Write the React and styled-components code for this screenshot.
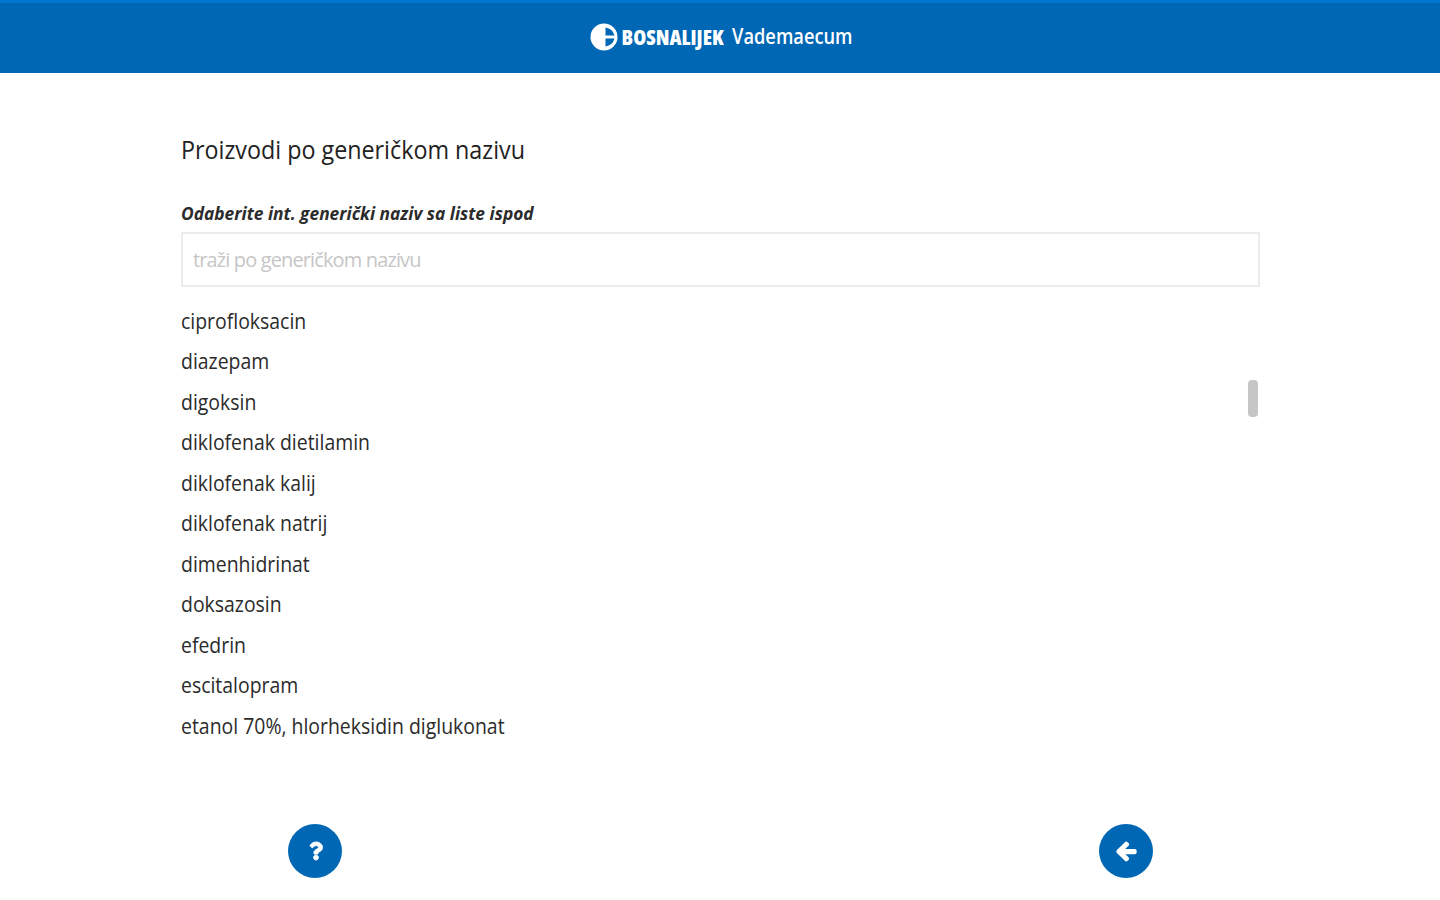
import React from 'react';
import styled, { createGlobalStyle } from 'styled-components';
import { FaArrowLeft, FaQuestion } from 'react-icons/fa';

const GlobalStyle = createGlobalStyle`
  * {
    box-sizing: border-box;
  }
  body {
    margin: 0;
    background: #fff;
    color: #2b2b2b;
    font-family: 'Open Sans', 'Noto Sans', sans-serif;
    overflow: hidden;
  }
`;

const Page = styled.div`
  display: flex;
  flex-direction: column;
  height: 900px;
`;

const Header = styled.header`
  display: flex;
  align-items: center;
  justify-content: center;
  height: 73px;
  padding: 0 0 2px 3px;
  background: #0067b5;
  border-top: 3px solid #0078d2;
  color: #fff;
`;

const Logo = styled.svg`
  width: 28px;
  height: 28px;
  margin-right: 3px;
`;

const Brand = styled.span`
  font-size: 21px;
  line-height: 28px;
  font-weight: 800;
  font-stretch: 75%;
`;

const AppName = styled.span`
  width: 121px;
  margin: 0 0 2px 8px;
  font-size: 21px;
  line-height: 28px;
  font-weight: 600;
  transform: scaleX(0.87);
  transform-origin: left;
`;

const Main = styled.main`
  flex: 1;
  width: 1080px;
  margin: 0 auto;
  padding: 56px 0 0 1px;
`;

const Title = styled.h1`
  margin: 0;
  font-size: 26px;
  line-height: 40px;
  font-weight: 400;
  color: #222;
  transform: scaleX(0.896);
  transform-origin: left;
`;

const Label = styled.label`
  display: block;
  margin-top: 31px;
  font-size: 18px;
  line-height: 26px;
  font-weight: 700;
  font-style: italic;
  transform: scaleX(0.963);
  transform-origin: left;
`;

const SearchInput = styled.input`
  display: block;
  width: 1079px;
  height: 55px;
  margin-top: 6px;
  padding: 0 10px 1px;
  border: 2px solid #ececec;
  font: inherit;
  font-size: 20px;
  letter-spacing: -0.87px;
  outline: none;
  &::placeholder {
    color: #c6c6c6;
    opacity: 1;
  }
`;

const ListArea = styled.div`
  display: flex;
  justify-content: space-between;
  margin-top: 13.5px;
  padding-right: 2px;
`;

const List = styled.ul`
  margin: 0;
  padding: 0;
  list-style: none;
`;

const Item = styled.li`
  height: 40.5px;
  font-size: 21px;
  line-height: 40px;
  white-space: nowrap;
  transform: scaleX(0.925);
  transform-origin: left;
`;

const ScrollThumb = styled.div`
  width: 10px;
  height: 37px;
  margin-top: 79.5px;
  border-radius: 4px;
  background: #c6c6c6;
`;

const Footer = styled.footer`
  display: flex;
  justify-content: space-between;
  width: 865px;
  height: 76px;
  margin: 0 auto;
`;

const RoundButton = styled.button`
  display: flex;
  align-items: center;
  justify-content: center;
  width: 54px;
  height: 54px;
  padding: 0 0 0 2px;
  border: 0;
  border-radius: 50%;
  background: #0067b5;
  color: #fff;
  font-size: ${props => props.$size};
  svg {
    overflow: visible;
    stroke: #fff;
    stroke-width: ${props => props.$stroke};
  }
`;

const generics = [
  'ciprofloksacin',
  'diazepam',
  'digoksin',
  'diklofenak dietilamin',
  'diklofenak kalij',
  'diklofenak natrij',
  'dimenhidrinat',
  'doksazosin',
  'efedrin',
  'escitalopram',
  'etanol 70%, hlorheksidin diglukonat',
];

const App = () => (
  <>
    <GlobalStyle />
    <Page>
      <Header>
        <Logo viewBox="0 0 28 28">
          <circle cx="14" cy="14" r="13.5" fill="#fff" />
          <path
            d="M15.500 4.500A11 11 0 0 1 24.500 12.500H15.500ZM15.500 15.500H24.500A11 11 0 0 1 15.500 23.500Z"
            fill="#0067b5"
          />
        </Logo>
        <Brand>BOSNALIJEK</Brand>
        <AppName>Vademaecum</AppName>
      </Header>
      <Main>
        <Title>Proizvodi po generičkom nazivu</Title>
        <Label htmlFor="generic">Odaberite int. generički naziv sa liste ispod</Label>
        <SearchInput id="generic" placeholder="traži po generičkom nazivu" />
        <ListArea>
          <List>
            {generics.map(name => (
              <Item key={name}>{name}</Item>
            ))}
          </List>
          <ScrollThumb />
        </ListArea>
      </Main>
      <Footer>
        <RoundButton $size="18px" $stroke="28px" aria-label="Pomoć">
          <FaQuestion />
        </RoundButton>
        <RoundButton $size="21px" $stroke="48px" aria-label="Nazad">
          <FaArrowLeft />
        </RoundButton>
      </Footer>
    </Page>
  </>
);

export default App;
